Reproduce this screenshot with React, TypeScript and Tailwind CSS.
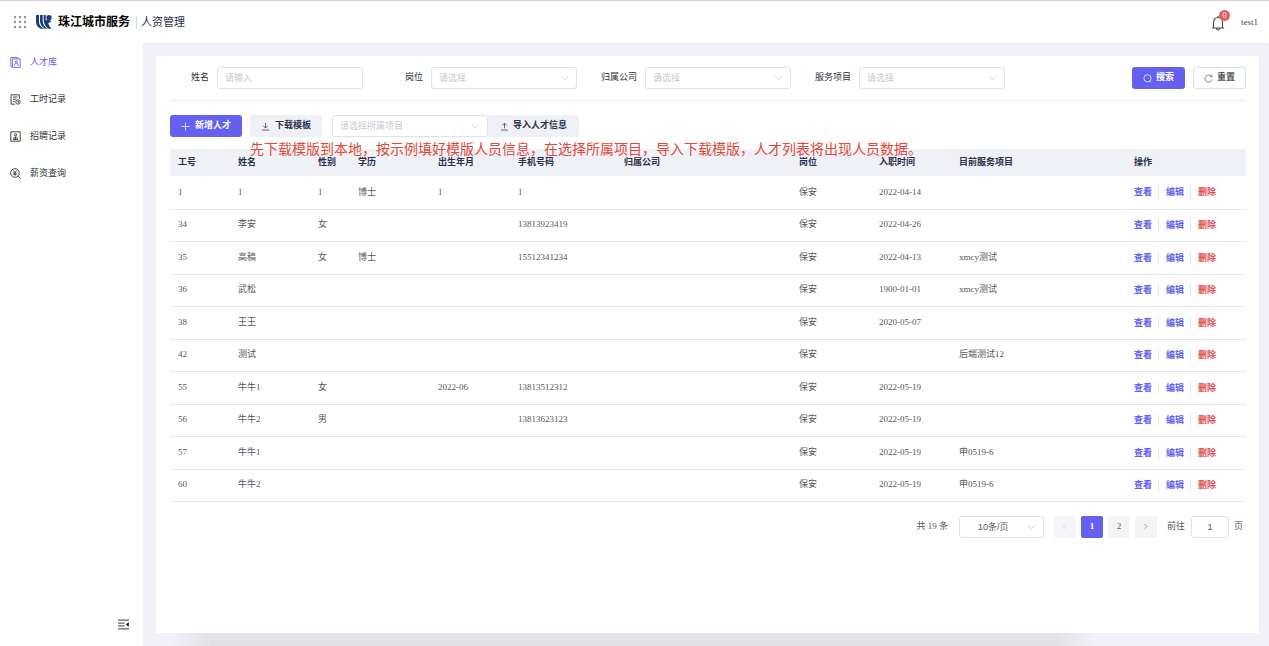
import type { ReactNode } from "react";

type Person = {
  id: number;
  name: string;
  gender?: string;
  degree?: string;
  birth?: string;
  phone?: string;
  company?: string;
  post: string;
  joined?: string;
  project?: string;
};

const people: Person[] = [
  { id: 1, name: "1", gender: "1", degree: "博士", birth: "1", phone: "1", post: "保安", joined: "2022-04-14" },
  { id: 34, name: "李安", gender: "女", phone: "13813923419", post: "保安", joined: "2022-04-26" },
  { id: 35, name: "高稿", gender: "女", degree: "博士", phone: "15512341234", post: "保安", joined: "2022-04-13", project: "xmcy测试" },
  { id: 36, name: "武松", post: "保安", joined: "1900-01-01", project: "xmcy测试" },
  { id: 38, name: "王王", post: "保安", joined: "2020-05-07" },
  { id: 42, name: "测试", post: "保安", project: "后端测试12" },
  { id: 55, name: "牛牛1", gender: "女", birth: "2022-06", phone: "13813512312", post: "保安", joined: "2022-05-19" },
  { id: 56, name: "牛牛2", gender: "男", phone: "13813623123", post: "保安", joined: "2022-05-19" },
  { id: 57, name: "牛牛1", post: "保安", joined: "2022-05-19", project: "申0519-6" },
  { id: 60, name: "牛牛2", post: "保安", joined: "2022-05-19", project: "申0519-6" },
];

const columns = [
  { title: "工号", width: "w-[60px]" },
  { title: "姓名", width: "w-[80px]" },
  { title: "性别", width: "w-[40px]" },
  { title: "学历", width: "w-[80px]" },
  { title: "出生年月", width: "w-[80px]" },
  { title: "手机号码", width: "w-[106px]" },
  { title: "归属公司", width: "" },
  { title: "岗位", width: "w-[80px]" },
  { title: "入职时间", width: "w-[80px]" },
  { title: "目前服务项目", width: "" },
  { title: "操作", width: "w-[120px]" },
];

const sans = "font-['Liberation_Sans','Noto_Sans_CJK_SC',sans-serif]";

const Icon = ({ children, className = "size-[9px]" }: { children: ReactNode; className?: string }) => (
  <svg
    viewBox="0 0 20 20"
    fill="none"
    stroke="currentColor"
    strokeWidth="1.6"
    aria-hidden="true"
    className={`shrink-0 ${className}`}>
    {children}
  </svg>
);

const menu = [
  {
    label: "人才库",
    icon: (
      <>
        <path d="M4.5 17H1.5V1h13v2.500" />
        <path d="M4.500 3.500h14V19h-14z" />
        <circle cx="11.500" cy="9" r="2" />
        <path d="M8 16c0-3 1.500-4.500 3.500-4.500S15 13 15 16" />
      </>
    ),
  },
  {
    label: "工时记录",
    icon: (
      <>
        <path d="M9 18.500H2v-17h15V9" />
        <path d="M5.500 5.500h8M5.500 9.500h6M5.500 13.500h3" />
        <circle cx="14.500" cy="14.500" r="4" />
        <path d="M14.500 12.500v2.500h2" />
      </>
    ),
  },
  {
    label: "招聘记录",
    icon: (
      <>
        <path d="M1.500 1.500h17v17h-17z" />
        <circle cx="10" cy="7" r="2" />
        <path d="M7 15v-2.500c0-2 6-2 6 0V15M5.500 15.500h9M10 11v4" />
      </>
    ),
  },
  {
    label: "薪资查询",
    icon: (
      <>
        <circle cx="9" cy="9" r="7.800" />
        <path d="M14.500 14.500l4.500 4.500M6 4.500L9 8.500l3-4M9 8.500V14M6 9h6M6 11.500h6" />
      </>
    ),
  },
];

const Chevron = () => (
  <Icon className="pointer-events-none absolute right-2 top-1/2 size-[9px] -translate-y-1/2 text-[#c0c4cc]">
    <path d="M2 6l8 8 8-8" />
  </Icon>
);

const SelectBox = ({ id, placeholder, className }: { id: string; placeholder: string; className: string }) => (
  <div className={`relative ${className}`}>
    <select
      id={id}
      aria-label={placeholder}
      className={`h-[22px] w-full appearance-none rounded-[3px] border border-[#e0e2e8] bg-white pl-[7px] pt-0.5 text-[#c8cad2] outline-none ${sans}`}>
      <option>{placeholder}</option>
    </select>
    <Chevron />
  </div>
);

const Field = ({ id, label, children }: { id: string; label: string; children: ReactNode }) => (
  <div className="flex items-center gap-2">
    <label htmlFor={id} className="w-[39px] whitespace-nowrap text-right text-[#303133]">
      {label}
    </label>
    {children}
  </div>
);

const Header = () => (
  <header className="flex h-[43px] items-center border-t border-[#d4d4d4] bg-white pl-[13px] pr-[11px] shadow-[0_1px_2px_#ececf2]">
    <svg viewBox="0 0 14 14" className="size-[14px] fill-[#8f9096]" aria-hidden="true">
      {[2, 7, 12].map((y) => [2, 7, 12].map((x) => <circle key={`${x}-${y}`} cx={x} cy={y} r="1.200" />))}
    </svg>
    <svg viewBox="0 0 48 42" className="ml-[9px] h-[14px] w-4 fill-[#1c3d7c]" aria-hidden="true">
      <path d="M0 0h9v20c0 9 6 16 15 21H15C6 38 0 31 0 21z" />
      <path d="M12 0h8v17c0 10 6 18 14 24h-8C17 35 12 28 12 18z" />
      <path d="M23 0h6v16c4 0 7-1 9-3l8 7-9 4c1 7 5 12 10 17H36C28 34 23 26 23 15z" />
      <circle cx="39" cy="8" r="8" />
    </svg>
    <h1 className="ml-1.5 text-[12px] font-bold text-black">珠江城市服务</h1>
    <span className="ml-1.5 h-[13px] w-px bg-[#dcdde3]" />
    <span className="ml-1 text-[11px] text-[#2c2f4a]">人资管理</span>
    <button type="button" aria-label="通知" className="relative ml-auto mt-0.5">
      <svg
        viewBox="0 0 28 32"
        fill="none"
        stroke="#4a4a4e"
        strokeWidth="2.200"
        className="h-4 w-[14px]"
        aria-hidden="true">
        <path d="M2 26h24M5 26V15c0-6 4-10 9-10s9 4 9 10v11M14 5V2M11 27c0 4 6 4 6 0" />
      </svg>
      <span className="absolute -top-[5px] left-[8px] flex size-[11px] items-center justify-center rounded-full bg-[#e0605f] text-[8px] leading-none text-white">
        0
      </span>
    </button>
    <span className="ml-4 mt-0.5 text-[#4a4a4e]">test1</span>
  </header>
);

const Sidebar = () => (
  <aside className="flex w-[143px] shrink-0 flex-col bg-white">
    <nav className="pt-px">
      {menu.map((m, i) => (
        <a
          key={m.label}
          href="#"
          className={`flex h-[37px] items-center gap-[9px] pl-[10px] ${i === 0 ? "text-[#6560e8]" : "text-[#303133]"}`}>
          <Icon className="size-[11px]">{m.icon}</Icon>
          {m.label}
        </a>
      ))}
    </nav>
    <button type="button" aria-label="收起菜单" className="mb-4 mr-[14px] mt-auto self-end text-[#222]">
      <Icon className="size-[11px]">
        <path d="M0 2h20M0 7.500h12M0 12.500h12M0 18h20" />
        <path d="M19 7v6l-4-3z" fill="currentColor" />
      </Icon>
    </button>
  </aside>
);

const Filters = () => (
  <form className="flex items-center justify-between border-b border-[#ebecf0] pb-[11px]">
    <div className="flex gap-[21px]">
      <Field id="name" label="姓名">
        <input
          id="name"
          placeholder="请输入"
          className={`h-[22px] w-[146px] rounded-[3px] border border-[#e0e2e8] px-[7px] outline-none placeholder:text-[#c8cad2] ${sans}`}
        />
      </Field>
      <Field id="post" label="岗位">
        <SelectBox id="post" placeholder="请选择" className="w-[146px]" />
      </Field>
      <Field id="company" label="归属公司">
        <SelectBox id="company" placeholder="请选择" className="w-[146px]" />
      </Field>
      <Field id="project" label="服务项目">
        <SelectBox id="project" placeholder="请选择" className="w-[146px]" />
      </Field>
    </div>
    <div className="flex gap-2 font-bold">
      <button type="button" className="flex h-[22px] items-center gap-1 rounded-[3px] bg-[#6560f0] px-[11px] text-white">
        <Icon>
          <circle cx="10" cy="9.500" r="8" />
          <path d="M15 15.500l3 3" />
        </Icon>
        搜索
      </button>
      <button
        type="button"
        className="flex h-[22px] items-center gap-1 rounded-[3px] border border-[#dcdfe6] px-[10px] text-[#55575d]">
        <Icon>
          <path d="M17 6a8 8 0 1 0 1 6M17.500 1.500V6.500H12.500" />
        </Icon>
        重置
      </button>
    </div>
  </form>
);

const Toolbar = () => (
  <div className="flex items-center font-bold">
    <button type="button" className="flex h-[22px] items-center gap-[5px] rounded-[3px] bg-[#6560f0] px-[11px] text-white">
      <Icon>
        <path d="M10 1v18M1 10h18" />
      </Icon>
      新增人才
    </button>
    <button type="button" className="ml-2 flex h-[22px] items-center gap-[5px] rounded-[3px] bg-[#f0f1f6] px-[11px] text-[#2c2f4a]">
      <Icon>
        <path d="M10 2v11M5 8.500l5 5 5-5M2 18h16" />
      </Icon>
      下载模板
    </button>
    <SelectBox id="import-project" placeholder="请选择所属项目" className="ml-[10px] w-[156px] font-normal" />
    <button type="button" className="flex h-[22px] items-center gap-1 rounded-r-[3px] bg-[#f0f1f6] px-3 text-[#2c2f4a]">
      <Icon>
        <path d="M10 14V3M5 7.500l5-5 5 5M2 18h16" />
      </Icon>
      导入人才信息
    </button>
  </div>
);

const PeopleTable = () => (
  <div className="relative">
    <p className="absolute -top-[9px] left-20 whitespace-nowrap text-[14px] leading-5 text-[#e0483a]">
      先下载模版到本地，按示例填好模版人员信息，在选择所属项目，导入下载模版，人才列表将出现人员数据。
    </p>
    <table className="w-full table-fixed text-left text-[#55575d]">
      <thead>
        <tr className="h-[27px] bg-[#f0f1f6] text-[#2c2f4a]">
          {columns.map((c) => (
            <th key={c.title} className={`px-2 font-bold ${c.width}`}>
              {c.title}
            </th>
          ))}
        </tr>
      </thead>
      <tbody>
        {people.map((p) => (
          <tr key={p.id} className="border-b border-[#e6e8ee] odd:h-[33px] even:h-8">
            <td className="px-2">{p.id}</td>
            <td className="px-2">{p.name}</td>
            <td className="px-2">{p.gender}</td>
            <td className="px-2">{p.degree}</td>
            <td className="px-2">{p.birth}</td>
            <td className="px-2">{p.phone}</td>
            <td className="px-2">{p.company}</td>
            <td className="px-2">{p.post}</td>
            <td className="px-2">{p.joined}</td>
            <td className="px-2">{p.project}</td>
            <td className="px-2">
              <div className="flex gap-[7px] font-bold leading-3 text-[#6560f0]">
                <a href="#" className="border-r border-[#e2e4ea] pr-1.5">
                  查看
                </a>
                <a href="#" className="border-r border-[#e2e4ea] pr-1.5">
                  编辑
                </a>
                <a href="#" className="text-[#e04f4f]">
                  删除
                </a>
              </div>
            </td>
          </tr>
        ))}
      </tbody>
    </table>
  </div>
);

const Pagination = () => (
  <div className="mt-[14px] flex items-center justify-end pr-[3px] text-[#55575d]">
    <span>共 19 条</span>
    <div className="relative ml-[11px] w-[85px]">
      <select
        aria-label="每页条数"
        className={`h-[22px] w-full appearance-none rounded-[3px] border border-[#e0e2e8] bg-white pl-[18px] pt-0.5 outline-none ${sans}`}>
        <option>10条/页</option>
      </select>
      <Chevron />
    </div>
    <div className="ml-[10px] flex gap-[5px]">
      <button
        type="button"
        aria-label="上一页"
        disabled
        className="flex h-[22px] w-[22px] items-center justify-center rounded-[2px] bg-[#f4f5f8] text-[#c0c4cc]">
        <Icon className="size-[7px]">
          <path d="M13 3l-7 7 7 7" />
        </Icon>
      </button>
      <button type="button" className="h-[22px] w-[22px] rounded-[2px] bg-[#6560f0] font-bold text-white">
        1
      </button>
      <button type="button" className="h-[22px] w-[22px] rounded-[2px] bg-[#f4f4f5]">
        2
      </button>
      <button
        type="button"
        aria-label="下一页"
        className="flex h-[22px] w-[22px] items-center justify-center rounded-[2px] bg-[#f4f4f5]">
        <Icon className="size-[7px]">
          <path d="M7 3l7 7-7 7" />
        </Icon>
      </button>
    </div>
    <label htmlFor="page" className="ml-[10px]">
      前往
    </label>
    <input
      id="page"
      defaultValue="1"
      className={`ml-1.5 mr-[5px] h-[22px] w-[38px] rounded-[3px] border border-[#e0e2e8] text-center outline-none ${sans}`}
    />
    <span>页</span>
  </div>
);

export default function App() {
  return (
    <div className="flex min-h-screen flex-col bg-[#f1f1f7] font-['Liberation_Serif','Noto_Sans_CJK_SC',serif] text-[9px] leading-normal">
      <Header />
      <div className="flex flex-1">
        <Sidebar />
        <div className="flex min-w-0 flex-1 flex-col">
          <main className="ml-[13px] mr-[10px] mt-[13px] flex flex-1 flex-col bg-white pl-[14px] pr-[13px] pt-[11px]">
            <Filters />
            <div className="mb-3 mt-[14px]">
              <Toolbar />
            </div>
            <PeopleTable />
            <Pagination />
          </main>
          <div className="ml-7 mr-[174px] flex h-[13px]">
            <div className="w-10 bg-linear-to-r from-transparent to-[#e2e2e7]" />
            <div className="flex-1 bg-linear-to-b from-[#e5e5ea] to-[#dfdfe4]" />
            <div className="w-10 bg-linear-to-l from-transparent to-[#e2e2e7]" />
          </div>
        </div>
      </div>
    </div>
  );
}
